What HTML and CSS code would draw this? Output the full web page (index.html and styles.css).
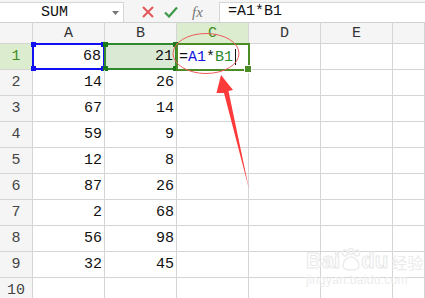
FILE: index.html
```html
<!DOCTYPE html>
<html>
<head>
<meta charset="utf-8">
<link rel="stylesheet" href="styles.css">
</head>
<body>
<div class="toolbar">
  <div class="namebox">
    <span class="name">SUM</span>
    <svg class="dd" width="7" height="4" viewBox="0 0 7 4"><path d="M0 0h7L3.5 4z" fill="#777"/></svg>
  </div>
  <div class="tools">
    <svg class="ic" width="12" height="12" viewBox="0 0 12 12"><path d="M1 1L11 11M11 1L1 11" stroke="#e2585a" stroke-width="2"/></svg>
    <svg class="ic" width="14" height="12" viewBox="0 0 14 12"><path d="M1 6.5L5 10.5L13 1.5" stroke="#3c9a4a" stroke-width="2.2" fill="none"/></svg>
    <span class="fx">fx</span>
  </div>
  <div class="formula">=A1*B1</div>
</div>

<div class="sheet">
  <div class="corner"></div>
  <div class="ch">A</div>
  <div class="ch">B</div>
  <div class="ch ch-on">C</div>
  <div class="ch">D</div>
  <div class="ch">E</div>
  <div class="ch"></div>

  <div class="rh rh-on">1</div>
  <div class="c num ref-a">68<i class="h tl"></i><i class="h tr"></i><i class="h bl"></i><i class="h br"></i></div>
  <div class="c num ref-b">21<i class="h tl"></i><i class="h tr"></i><i class="h bl"></i><i class="h br"></i></div>
  <div class="c active"><span class="k">=</span><span class="ra">A1</span><span class="k">*</span><span class="rb">B1</span><span class="caret"></span><i class="fill"></i></div>
  <div class="c"></div><div class="c"></div><div class="c"></div>

  <div class="rh">2</div><div class="c num">14</div><div class="c num">26</div><div class="c"></div><div class="c"></div><div class="c"></div><div class="c"></div>
  <div class="rh">3</div><div class="c num">67</div><div class="c num">14</div><div class="c"></div><div class="c"></div><div class="c"></div><div class="c"></div>
  <div class="rh">4</div><div class="c num">59</div><div class="c num">9</div><div class="c"></div><div class="c"></div><div class="c"></div><div class="c"></div>
  <div class="rh">5</div><div class="c num">12</div><div class="c num">8</div><div class="c"></div><div class="c"></div><div class="c"></div><div class="c"></div>
  <div class="rh">6</div><div class="c num">87</div><div class="c num">26</div><div class="c"></div><div class="c"></div><div class="c"></div><div class="c"></div>
  <div class="rh">7</div><div class="c num">2</div><div class="c num">68</div><div class="c"></div><div class="c"></div><div class="c"></div><div class="c"></div>
  <div class="rh">8</div><div class="c num">56</div><div class="c num">98</div><div class="c"></div><div class="c"></div><div class="c"></div><div class="c"></div>
  <div class="rh">9</div><div class="c num">32</div><div class="c num">45</div><div class="c"></div><div class="c"></div><div class="c"></div><div class="c"></div>
  <div class="rh">10</div><div class="c"></div><div class="c"></div><div class="c"></div><div class="c"></div><div class="c"></div><div class="c"></div>
</div>

<svg class="annot" width="425" height="298" viewBox="0 0 425 298">
  <ellipse cx="206" cy="53.5" rx="33" ry="20" fill="none" stroke="#ef5a5a" stroke-width="1"/>
  <polygon points="221,75 233,90 228.5,91 249,189 224,93 216.5,93" fill="#fd3a3a"/>
</svg>

<div class="watermark">
  <div class="wm-top"><span class="wm-bai">Bai</span><svg class="paw" width="24" height="24" viewBox="0 0 24 24"><g fill="none" stroke="#ececec" stroke-width="1.5"><ellipse cx="6" cy="5" rx="2.5" ry="3"/><ellipse cx="12" cy="3.5" rx="2.5" ry="3"/><ellipse cx="18" cy="5" rx="2.5" ry="3"/><path d="M4 18c0-5 4-9 8-9s8 4 8 9c0 3-3 4-8 4s-8-1-8-4z"/></g></svg><span class="wm-du">du</span><span class="wm-cn">经验</span></div>
  <div class="wm-url">jingyan.baidu.com</div>
</div>
</body>
</html>
```

FILE: styles.css
```css
html, body {
  margin: 0;
  padding: 0;
  background: #ffffff;
}
body {
  width: 425px;
  height: 298px;
  overflow: hidden;
  position: relative;
  font-family: "Liberation Mono", "DejaVu Sans Mono", monospace;
  color: #222;
}

.toolbar {
  height: 22px;
  box-sizing: border-box;
  padding-top: 2px;
  background: #f5f5f5;
  display: flex;
  align-items: stretch;
}
.namebox {
  width: 124px;
  box-sizing: border-box;
  background: #fff;
  border: 1px solid #d6d6d6;
  border-left: none;
  border-bottom: none;
  display: flex;
  align-items: center;
  position: relative;
}
.name {
  flex: 1;
  text-align: center;
  font-size: 15px;
  padding-right: 14px;
  color: #111;
}
.dd {
  position: absolute;
  right: 4px;
  top: 8px;
}
.tools {
  width: 95px;
  display: flex;
  align-items: center;
  padding-left: 18px;
  box-sizing: border-box;
  gap: 10px;
}
.fx {
  font-family: "Liberation Serif", serif;
  font-style: italic;
  font-size: 15px;
  color: #777;
  margin-left: 4px;
}
.formula {
  flex: 1;
  background: #fff;
  border: 1px solid #d6d6d6;
  border-right: none;
  border-bottom: none;
  font-size: 15px;
  padding-left: 8px;
  line-height: 18px;
  color: #111;
}

.sheet {
  display: grid;
  grid-template-columns: 33px repeat(5, 72px) 1fr;
  grid-template-rows: 22px;
  grid-auto-rows: 26px;
}
.sheet > div {
  box-sizing: border-box;
  border-right: 1px solid #d5d5d5;
  border-bottom: 1px solid #d5d5d5;
}
.corner, .ch {
  background: #f5f5f5;
  border-top: 1px solid #d0d0d0;
}
.ch {
  display: flex;
  align-items: center;
  justify-content: center;
  font-size: 15px;
  color: #333;
  padding-top: 1px;
}
.ch-on {
  background: #dbeccf;
  color: #3e8e1e;
}
.rh {
  background: #f5f5f5;
  display: flex;
  align-items: center;
  justify-content: center;
  font-size: 15px;
  color: #444;
}
.rh-on {
  background: #dbeccf;
  color: #3e8e1e;
}
.c {
  position: relative;
  font-size: 15px;
  color: #111;
  display: flex;
  align-items: center;
}
.num {
  justify-content: flex-end;
  padding-right: 2px;
}

.ref-a {
  border: 2px solid #1010f0 !important;
  margin-top: -1px;
  margin-left: -1px;
  width: calc(100% + 1px);
}
.ref-a .h { background: #1010f0; }
.ref-b {
  background: #d9e9d4;
  border: 2px solid #2f8a2f !important;
  margin-top: -1px;
  margin-left: -1px;
  width: calc(100% + 1px);
}
.ref-b .h { background: #1a7a1a; }
.h {
  position: absolute;
  width: 5px;
  height: 5px;
}
.tl { left: -3px; top: -3px; }
.tr { right: -3px; top: -3px; }
.bl { left: -3px; bottom: -3px; }
.br { right: -3px; bottom: -3px; }

.active {
  border: 2px solid #4b8c27 !important;
  margin-top: -1px;
  margin-left: -1px;
  width: calc(100% + 2px);
  height: 28px;
  z-index: 2;
  padding-left: 1px;
  background: #fff;
}
.k { color: #111; }
.ra { color: #1515e0; }
.rb { color: #2d8a2d; }
.caret {
  display: inline-block;
  width: 1px;
  height: 16px;
  background: #111;
  margin-left: 2px;
}
.fill {
  position: absolute;
  right: -4px;
  bottom: -4px;
  width: 6px;
  height: 6px;
  background: #4b8c27;
  border: 1px solid #fff;
}

.annot {
  position: absolute;
  left: 0;
  top: 0;
  pointer-events: none;
  z-index: 5;
}

.watermark {
  position: absolute;
  left: 306px;
  top: 246px;
  z-index: 4;
  color: #ebebeb;
  font-family: "Liberation Sans", sans-serif;
}
.wm-top {
  display: flex;
  align-items: flex-end;
  height: 26px;
}
.wm-bai, .wm-du {
  font-size: 22px;
  font-weight: bold;
  line-height: 22px;
  color: transparent;
  -webkit-text-stroke: 1px #e8e8e8;
}
.paw { margin: 0 -2px 0 -1px; }
.wm-cn {
  font-family: "Noto Sans CJK SC", sans-serif;
  font-size: 16px;
  line-height: 20px;
  margin-left: 3px;
  color: #ebebeb;
}
.wm-url {
  font-size: 12px;
  color: #ececec;
  margin-top: 1px;
  letter-spacing: 0.3px;
}
```
